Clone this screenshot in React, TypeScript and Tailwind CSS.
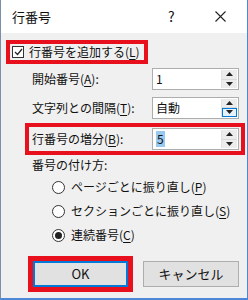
import React from "react";

const FONT = { fontFamily: '"Noto Sans CJK JP", "Noto Sans", sans-serif' };

function U({ c }: { c: string }) {
  return <span className="underline underline-offset-2 decoration-1">{c}</span>;
}

function Spin({ hoverDown }: { hoverDown?: boolean }) {
  return (
    <div className="flex flex-col w-[16px] h-full border-l border-[#e3e3e3]">
      <div className="flex-1 flex items-center justify-center bg-[#ececec] border-b border-[#dadada]">
        <svg width="7" height="4" viewBox="0 0 7 4"><path d="M3.5 0 L7 4 L0 4 Z" fill="#222" /></svg>
      </div>
      <div
        className={
          hoverDown
            ? "flex-1 flex items-center justify-center bg-[#e5f1fb] border border-[#0078d7]"
            : "flex-1 flex items-center justify-center bg-[#ececec]"
        }
      >
        <svg width="7" height="4" viewBox="0 0 7 4"><path d="M0 0 L7 0 L3.5 4 Z" fill="#222" /></svg>
      </div>
    </div>
  );
}

function NumInput({ value, selected, hoverDown }: { value: string; selected?: boolean; hoverDown?: boolean }) {
  return (
    <div className="w-[87px] h-[22px] bg-white border border-[#adadad] flex items-stretch p-[1px]">
      <div className="flex-1 flex items-center pl-[2px]">
        <span className={selected ? "bg-[#99c9ef] px-[1px] leading-[16px]" : "leading-[16px]"}>{value}</span>
      </div>
      <Spin hoverDown={hoverDown} />
    </div>
  );
}

function Radio({ checked, children }: { checked?: boolean; children: React.ReactNode }) {
  return (
    <div className="flex items-center h-[24px] pl-[51px]">
      <div className="w-[13px] h-[13px] rounded-full border border-[#333] bg-white flex items-center justify-center">
        {checked && <div className="w-[7px] h-[7px] rounded-full bg-[#222]" />}
      </div>
      <span className="ml-[6px]">{children}</span>
    </div>
  );
}

export default function App() {
  return (
    <div
      style={FONT}
      className="w-[248px] h-[300px] bg-[#f0f0f0] text-[12px] text-[#111] border-l border-l-[#7d8fa8] border-r border-r-[#4d88d8] border-b-2 border-b-[#4d88d8] flex flex-col overflow-hidden"
    >
      {/* title bar */}
      <div className="h-[33px] bg-white flex items-center pl-[11px] shrink-0">
        <span className="text-[13px]">行番号</span>
        <span className="ml-auto text-[14px] w-[10px]">?</span>
        <svg className="ml-[37px] mr-[21px]" width="11" height="11" viewBox="0 0 11 11">
          <path d="M0.5 0.5 L10.5 10.5 M10.5 0.5 L0.5 10.5" stroke="#222" strokeWidth="1.1" />
        </svg>
      </div>

      {/* add line numbers */}
      <div className="ml-[5px] mt-[7px] w-[142px] h-[24px] border-[4px] border-[#e8101c] flex items-center pl-[2px]">
        <div className="w-[12px] h-[12px] border border-[#333] bg-white flex items-center justify-center">
          <svg width="9" height="8" viewBox="0 0 9 8"><path d="M1 4 L3.5 6.5 L8 1" stroke="#222" strokeWidth="1.2" fill="none" /></svg>
        </div>
        <span className="ml-[5px] whitespace-nowrap">行番号を追加する(<U c="L" />)</span>
      </div>

      {/* start */}
      <div className="flex items-center mt-[4px] pl-[31px]">
        <span className="w-[120px]">開始番号(<U c="A" />):</span>
        <NumInput value="1" />
      </div>

      {/* spacing */}
      <div className="flex items-center mt-[7px] pl-[31px]">
        <span className="w-[120px]">文字列との間隔(<U c="T" />):</span>
        <NumInput value="自動" hoverDown />
      </div>

      {/* increment */}
      <div className="ml-[24px] mt-[4px] w-[220px] h-[32px] border-[4px] border-[#e8101c] flex items-center pl-[3px]">
        <span className="w-[120px]">行番号の増分(<U c="B" />):</span>
        <NumInput value="5" selected />
      </div>

      <div className="pl-[31px] mt-[1px] h-[18px] flex items-center">番号の付け方:</div>

      <div className="mt-[1px] flex flex-col">
        <Radio>ページごとに振り直し(<U c="P" />)</Radio>
        <Radio>セクションごとに振り直し(<U c="S" />)</Radio>
        <Radio checked>連続番号(<U c="C" />)</Radio>
      </div>

      {/* buttons */}
      <div className="flex items-center mt-[9px] pl-[27px]">
        <div className="w-[105px] h-[36px] border-[5px] border-[#e8101c]">
          <div className="w-full h-full bg-[#e1e1e1] border-2 border-[#0078d7] flex items-center justify-center text-[13px]">
            OK
          </div>
        </div>
        <div className="ml-[10px] w-[96px] h-[26px] bg-[#e1e1e1] border border-[#adadad] flex items-center justify-center text-[13px]">
          キャンセル
        </div>
      </div>
    </div>
  );
}
